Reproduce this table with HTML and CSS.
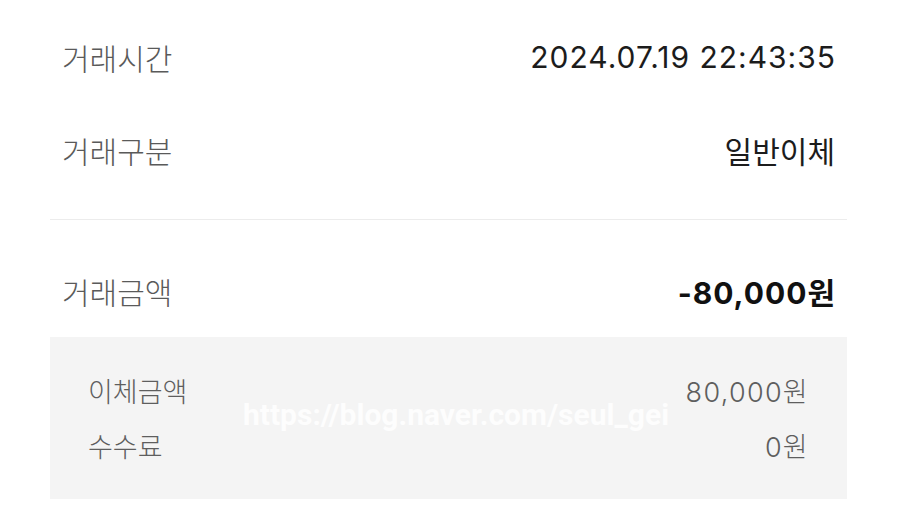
FILE: index.html
```html
<!DOCTYPE html>
<html lang="ko">
<head>
    <meta charset="UTF-8">
    <title>거래내역 상세</title>
    <link rel="stylesheet" href="styles.css">
</head>
<body>
    <div class="detail">
        <div class="section">
            <div class="row">
                <span class="label">거래시간</span>
                <span class="value num">2024.07.19 22:43:35</span>
            </div>
            <div class="row">
                <span class="label">거래구분</span>
                <span class="value">일반이체</span>
            </div>
        </div>
        <div class="divider"></div>
        <div class="row total">
            <span class="label">거래금액</span>
            <span class="value strong num">-80,000원</span>
        </div>
        <div class="breakdown">
            <div class="sub-row">
                <span>이체금액</span>
                <span class="num">80,000원</span>
            </div>
            <div class="sub-row">
                <span>수수료</span>
                <span class="num">0원</span>
            </div>
            <div class="watermark">https://blog.naver.com/seul_gei</div>
        </div>
    </div>
</body>
</html>
```

FILE: styles.css
```css
body {
    margin: 0;
    background: #ffffff;
    font-family: "Inter", "Noto Sans CJK KR", sans-serif;
}

.detail {
    width: 797px;
    margin-left: 50px;
}

.section {
    padding-top: 10px;
    padding-bottom: 23px;
}

.row {
    height: 93px;
    padding: 0 12px;
    display: flex;
    align-items: center;
    justify-content: space-between;
    font-size: 30px;
}

.label {
    color: #5a5a5a;
    font-weight: 300;
}

.value {
    color: #1c1c1c;
}

.value.strong {
    font-weight: bold;
    color: #111111;
}

.num {
    letter-spacing: 1px;
    margin-right: -1px;
}

.divider {
    height: 1px;
    background-color: #ececec;
}

.total {
    margin-top: 24px;
}

.breakdown {
    position: relative;
    background-color: #f4f4f4;
    padding: 26px 39px 26px 38px;
}

.sub-row {
    height: 55px;
    display: flex;
    align-items: center;
    justify-content: space-between;
    font-size: 27px;
    font-weight: 300;
    color: #5e5e5e;
}

.sub-row .num {
    letter-spacing: 1.3px;
}

.watermark {
    position: absolute;
    left: 193px;
    top: 60px;
    font-family: "Roboto", sans-serif;
    font-size: 30px;
    font-weight: bold;
    color: rgba(255, 255, 255, 0.85);
}
```
